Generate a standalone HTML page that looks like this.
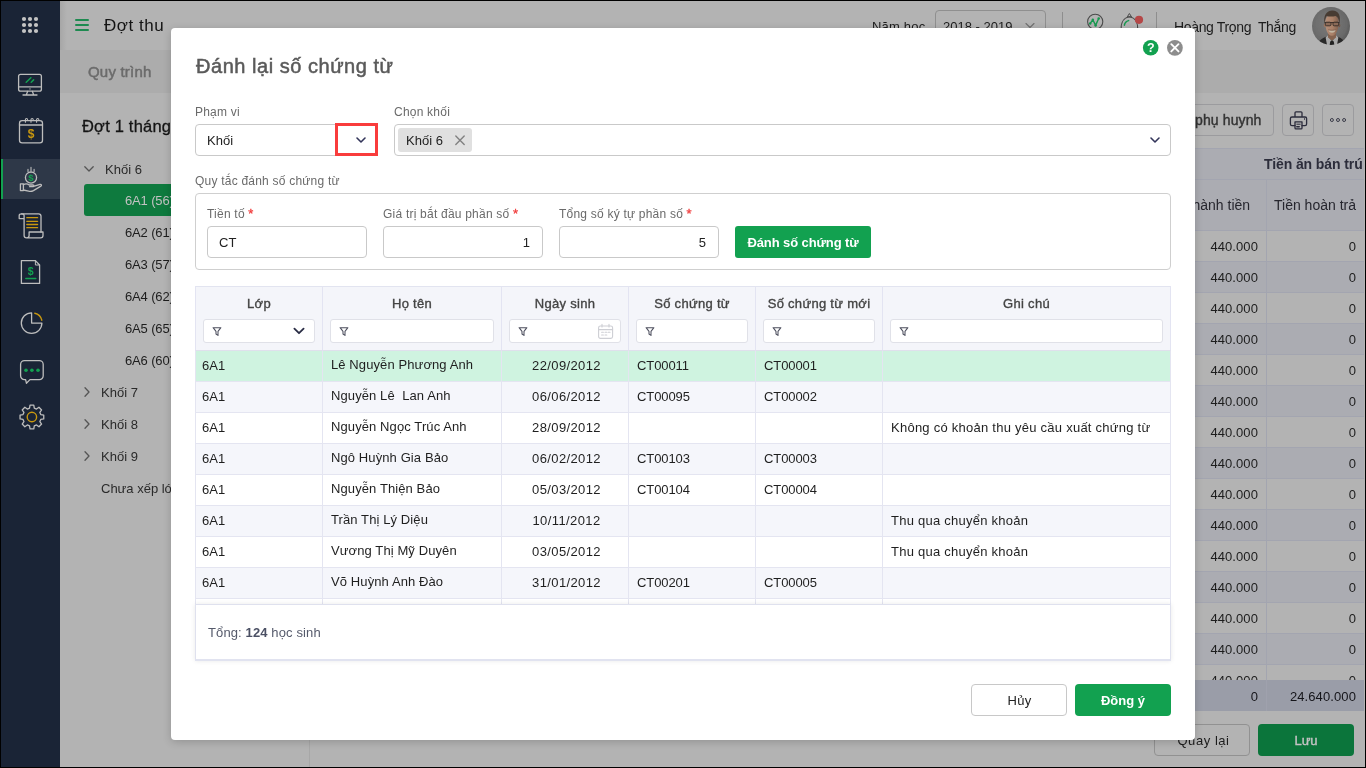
<!DOCTYPE html>
<html lang="vi">
<head>
<meta charset="utf-8">
<title>Đợt thu - Đánh lại số chứng từ</title>
<style>
*{box-sizing:border-box;margin:0;padding:0}
html,body{width:1366px;height:768px;overflow:hidden;background:#000}
body{font-family:"Liberation Sans",sans-serif;font-size:13px;color:#222;position:relative}
#app{position:absolute;left:0;top:0;width:1366px;height:768px;overflow:hidden;background:#b3b3b3;will-change:transform}
#app div,#app span,#app svg{position:absolute;white-space:pre}
#app span.i{position:static}
.frame{left:0;top:0;width:1366px;height:768px;border:1px solid #000;z-index:50;pointer-events:none}
/* sidebar */
#side{left:0;top:0;width:60px;height:768px;background:#1a2436}
#side .act{left:0;top:159px;width:60px;height:40px;background:#2e3848}
#side .bar{left:1px;top:159px;width:2px;height:40px;background:#12a150}
/* top */
#top{left:60px;top:0;width:1306px;height:50px;background:#b3b3b3}
#tabs{left:60px;top:50px;width:1306px;height:43px;background:#acacac}
.t{height:20px;line-height:20px}
/* tree */
.tr{left:125px;font-size:13px;color:#1d1d1d;height:20px;line-height:20px;letter-spacing:-.15px}
.tg{left:101px;font-size:13px;color:#2a2a2a;height:20px;line-height:20px}
/* right table */
.rrow{left:326px;width:1038px;height:31px;border-bottom:1px solid #a3a5b0}
.rrow.z{background:#abacb2}
.rrow i{position:absolute;left:940px;top:0;width:1px;height:31px;background:#a3a5b0}
.rrow b{position:absolute;font-weight:400;font-style:normal;letter-spacing:.08px;top:6px;height:20px;line-height:20px;font-size:13px;color:#1d1d1d;text-align:right}
.rrow b.a{right:106px}
.rrow b.c{right:8px}
/* modal */
#modal{left:171px;top:28px;width:1024px;height:712px;background:#fff;border-radius:4px;box-shadow:0 2px 8px rgba(0,0,0,.18)}
.lbl{font-size:12px;color:#6a6a6a;height:16px;line-height:16px;letter-spacing:.22px}
.lbl em{font-style:normal;color:#f03a3a;position:static;font-size:13px;-webkit-text-stroke:.3px #f03a3a}
.inp{height:32px;border:1px solid #c9c9c9;border-radius:4px;background:#fff}
.inp span{top:6px;height:20px;line-height:20px;font-size:13px;color:#222}
/* grid */
.gh{top:286px;height:65px;background:#f4f5fa;border-top:1px solid #e2e4f0;border-left:1px solid #e3e4f2;border-bottom:1px solid #dfe0ec}
.gh .h{left:0;right:0;top:7px;height:20px;line-height:20px;text-align:center;font-weight:400;-webkit-text-stroke:.35px #444;letter-spacing:.3px;font-size:13px;color:#444}
.gh .f{left:7px;right:7px;top:32px;height:24px;background:#fff;border:1px solid #e0e1e8;border-radius:3px}
.row{left:195px;width:976px;height:31px;border-bottom:1px solid #e4e5f1;border-left:1px solid #e4e5f1;border-right:1px solid #e4e5f1;background:#fff;font-size:13px;color:#1f1f1f}
.row.z{background:#f5f6fb}
.row.s{background:#cff3e0}
.row i{position:absolute;top:0;width:1px;height:31px;background:#e4e5f1}
.row span{top:5px;height:20px;line-height:20px}
.c1{left:6px}.c2{left:135px;top:4px !important;letter-spacing:.1px}.c3{left:307px;width:127px;text-align:center;letter-spacing:.39px}.c4{left:441px;letter-spacing:-.1px}.c5{left:568px;letter-spacing:-.1px}.c6{left:695px;letter-spacing:.25px}
.btn{height:32px;border-radius:3px;text-align:center;line-height:32px;font-size:14px}
</style>
</head>
<body>
<div id="app">
<div id="side">
  <div class="act"></div><div class="bar"></div>
  <svg width="60" height="768" viewBox="0 0 60 768" style="left:0;top:0" fill="none" stroke="#bdbdbd" stroke-width="1.3" stroke-linecap="round" stroke-linejoin="round">
    <!-- app grid dots -->
    <g fill="#c4c4c4" stroke="none">
      <circle cx="24" cy="19" r="2.1"/><circle cx="30" cy="19" r="2.1"/><circle cx="36" cy="19" r="2.1"/>
      <circle cx="24" cy="25" r="2.1"/><circle cx="30" cy="25" r="2.1"/><circle cx="36" cy="25" r="2.1"/>
      <circle cx="24" cy="31" r="2.1"/><circle cx="30" cy="31" r="2.1"/><circle cx="36" cy="31" r="2.1"/>
    </g>
    <!-- monitor -->
    <rect x="18.6" y="74.3" width="22.8" height="16.9" rx="2"/>
    <path d="M18.6 86.9H41.4M27.6 91.4L26.4 94.8M32.4 91.4L33.6 94.8M23 95H37"/>
    <circle cx="30" cy="88.9" r=".7" fill="#bdbdbd" stroke="none"/>
    <path d="M26.2 82.3L30.9 77.7M31.2 82.3L33.6 79.9" stroke="#12a150" stroke-width="1.5"/>
    <!-- calendar -->
    <rect x="19.5" y="120.6" width="23" height="22.2" rx="2.6"/>
    <path d="M19.5 125H42.5"/>
    <path d="M25.4 122.2V119.6a1.1 1.1 0 0 1 2.2 0M31 122.2V119.6a1.1 1.1 0 0 1 2.2 0M36.6 122.2V119.6a1.1 1.1 0 0 1 2.2 0" stroke-width="1.1"/>
    <text x="31" y="138.2" font-family="Liberation Sans, sans-serif" font-size="12" font-weight="700" fill="#c9980f" stroke="none" text-anchor="middle">$</text>
    <!-- hand + coin -->
    <circle cx="31" cy="177.6" r="5.6"/>
    <path d="M28 169.2V171.4M31 167.2V171M34.1 169.2V171.4" stroke-width="1.1"/>
    <text x="31" y="181.2" font-family="Liberation Sans, sans-serif" font-size="9.5" font-weight="700" fill="#12a150" stroke="none" text-anchor="middle">$</text>
    <path d="M20.4 183.8H23.4V190.6H20.4Z"/>
    <path d="M23.4 184.6C25.5 183.6 27.6 183.8 29.2 185H33c1.2 0 1.2 1.7 0 1.7H29.6M33.6 186.4L40 184.4c1.3-.4 2 1 .9 1.7L33.4 190.6c-1.6.9-3 1-4.8.6L23.4 190"/>
    <!-- scroll -->
    <path d="M24.2 218.6H19.2V215.4c0-2 4.9-2 4.9 0V235.6c0 3 5 3 5 0V232H43v3.6c0 1.4-1 2.3-2.4 2.3H26.6"/>
    <path d="M21.6 213.9H38.6c1.4 0 2.4 1 2.4 2.4V232"/>
    <path d="M26.8 217.7H37.6M26.8 221.3H37.6M26.8 224.5H37.6M26.8 227.7H37.6" stroke="#c9980f" stroke-width="1.3"/>
    <!-- document -->
    <path d="M21.4 260.6H35.4L39.6 265V283.4H21.4Z"/>
    <path d="M35.4 260.6V265H39.6" stroke-width="1"/>
    <text x="30.6" y="274.6" font-family="Liberation Sans, sans-serif" font-size="10.5" font-weight="700" fill="#12a150" stroke="none" text-anchor="middle">$</text>
    <path d="M25.8 278.5H35.8" stroke="#12a150" stroke-width="1.4"/>
    <!-- pie -->
    <path d="M31.6 312.8A10.3 10.3 0 1 0 41.9 323.1H31.6Z"/>
    <path d="M34.8 313.2A9.4 9.4 0 0 1 41.8 320.2" stroke="#c9980f" stroke-width="1.4"/>
    <!-- chat -->
    <path d="M24.4 360.6H39.4a3.8 3.8 0 0 1 3.8 3.8V375.8a3.8 3.8 0 0 1-3.8 3.8H30L26.4 383.2 25.6 379.6H24.4a3.8 3.8 0 0 1-3.8-3.8V364.4a3.8 3.8 0 0 1 3.8-3.8Z"/>
    <g fill="#12a150" stroke="none"><circle cx="26" cy="370.2" r="1.8"/><circle cx="31.9" cy="370.2" r="1.8"/><circle cx="38" cy="370.2" r="1.8"/></g>
    <!-- gear -->
    <g transform="translate(31.9 417)">
      <path d="M-2.38 -8.89 L-1.88 -11.85 L1.88 -11.85 L2.38 -8.89 L4.60 -7.97 L7.05 -9.71 L9.71 -7.05 L7.97 -4.60 L8.89 -2.38 L11.85 -1.88 L11.85 1.88 L8.89 2.38 L7.97 4.60 L9.71 7.05 L7.05 9.71 L4.60 7.97 L2.38 8.89 L1.88 11.85 L-1.88 11.85 L-2.38 8.89 L-4.60 7.97 L-7.05 9.71 L-9.71 7.05 L-7.97 4.60 L-8.89 2.38 L-11.85 1.88 L-11.85 -1.88 L-8.89 -2.38 L-7.97 -4.60 L-9.71 -7.05 L-7.05 -9.71 L-4.60 -7.97Z" stroke-linejoin="round"/>
      <circle r="4.7" stroke="#c9980f" stroke-width="1.4"/>
    </g>
  </svg>
</div>
<!--/SIDE-->
<div id="top"></div>
<div id="tabs"></div>
<div style="left:60px;top:1px;width:7px;height:49px;background:linear-gradient(to right,rgba(0,0,0,.07),rgba(0,0,0,0))"></div>
<!-- hamburger -->
<div style="left:75px;top:19px;width:14px;height:2px;background:#1e8a50;border-radius:1px"></div>
<div style="left:75px;top:24px;width:14px;height:2px;background:#1e8a50;border-radius:1px"></div>
<div style="left:75px;top:29px;width:14px;height:2px;background:#1e8a50;border-radius:1px"></div>
<div class="t" style="left:104px;top:16px;font-size:17px;color:#141414;letter-spacing:.55px">Đợt thu</div>
<div class="t" style="left:88px;top:62px;font-size:15px;color:#6b6b6b;-webkit-text-stroke:.5px #6b6b6b;letter-spacing:.2px">Quy trình</div>
<!-- school year -->
<div class="t" style="left:872px;top:17px;font-size:13px;color:#1c1c1c;letter-spacing:.2px">Năm học</div>
<div style="left:935px;top:10px;width:111px;height:32px;border:1px solid #8f8f8f;border-radius:4px"></div>
<div class="t" style="left:943px;top:17px;font-size:13px;color:#1c1c1c">2018 - 2019</div>
<svg style="left:1023px;top:21px" width="14" height="10" viewBox="0 0 14 10" fill="none" stroke="#707070" stroke-width="1.1" stroke-linecap="round" stroke-linejoin="round"><path d="M3 2.5L7 6.5L11 2.5"/></svg>
<div style="left:1062px;top:12px;width:1px;height:26px;background:#8e8e8e"></div>
<div style="left:1156px;top:12px;width:1px;height:26px;background:#8e8e8e"></div>
<!-- header icons -->
<svg style="left:1084px;top:8px" width="62" height="32" viewBox="1084 8 62 32" fill="none" stroke-linecap="round" stroke-linejoin="round">
  <circle cx="1095.2" cy="21.8" r="7.6" stroke="#4a4a4a" stroke-width="1.1"/>
  <path d="M1090.2 23.4L1092.8 19.8L1095.6 25.4L1098.7 18.5" stroke="#17994f" stroke-width="1.4"/>
  <g fill="#17994f"><circle cx="1090.2" cy="23.4" r="1.25"/><circle cx="1092.8" cy="19.8" r="1.25"/><circle cx="1095.6" cy="25.4" r="1.25"/><circle cx="1098.7" cy="18.5" r="1.25"/></g>
  <path d="M1121.2 30C1120.6 22.6 1123.8 17.6 1129.4 16.8C1135 17.6 1138.2 22.6 1137.6 30" stroke="#4a4a4a" stroke-width="1.1"/>
  <path d="M1127.5 16.5L1129.4 13.5L1131.3 16.5Z" stroke="#4a4a4a" stroke-width="1"/>
  <path d="M1124.4 25.2C1124.8 22.8 1126.4 21.2 1128.6 20.6" stroke="#17994f" stroke-width="1.5"/>
  <circle cx="1139" cy="19.8" r="4.1" fill="#b54747"/>
</svg>
<div class="t" style="left:1174px;top:17px;font-size:14px;color:#1c1c1c;letter-spacing:-.35px">Hoàng Trọng  Thắng</div>
<!-- avatar -->
<svg style="left:1312px;top:7px" width="38" height="38" viewBox="0 0 38 38">
  <defs><clipPath id="avc"><circle cx="19" cy="19" r="19"/></clipPath>
  <radialGradient id="avg" cx="45%" cy="45%" r="60%"><stop offset="0" stop-color="#7a7a7a"/><stop offset=".7" stop-color="#6a6a6a"/><stop offset="1" stop-color="#4e4e4e"/></radialGradient>
  <linearGradient id="avf" x1="0" y1="0" x2="1" y2="0"><stop offset="0" stop-color="#b58e78"/><stop offset=".55" stop-color="#a98068"/><stop offset="1" stop-color="#80604e"/></linearGradient>
  <filter id="avb" x="-10%" y="-10%" width="120%" height="120%"><feGaussianBlur stdDeviation=".45"/></filter></defs>
  <g clip-path="url(#avc)"><g filter="url(#avb)">
    <rect x="-2" y="-2" width="42" height="42" fill="url(#avg)"/>
    <path d="M5 40C6 33.5 10 31.5 14.5 29.5L20 36L25.5 29.5C30 31.5 33 33.5 34 40Z" fill="#2a2929"/>
    <path d="M13.6 30.4L15.6 28.6L20 35L24.4 28.6L26.4 30.4L24.6 40H15.4Z" fill="#a9a9a9"/>
    <path d="M18.2 34.6L20 33.4L21.8 34.6L22.6 40H17.4Z" fill="#232323"/>
    <path d="M16 26H24V30.5L20 33.4L16 30.5Z" fill="#85634f"/>
    <path d="M13.4 16C13.2 10.5 15.6 8 20 8C24.4 8 26.8 10.5 26.6 16C26.6 22 24.6 28.6 20 28.8C15.4 28.6 13.4 22 13.4 16Z" fill="url(#avf)"/>
    <ellipse cx="12.7" cy="18.4" rx="1" ry="1.8" fill="#9a7460"/><ellipse cx="27.3" cy="18.4" rx="1" ry="1.8" fill="#74574a"/>
    <path d="M12.6 16.8C11 9 14.4 3.6 20.4 3.4C26.4 3.4 29.2 8.4 27.4 16.8C27.2 12.6 26 10 23.6 9C20 10 16.6 9.6 14.6 9C13.4 11 12.8 13.6 12.6 16.8Z" fill="#473a31"/>
    <path d="M12.6 15.6H27.4" stroke="#2a2320" stroke-width=".9"/>
    <rect x="13.4" y="15.2" width="5.6" height="3.6" rx="1.2" fill="#8a6a58" stroke="#2a2320" stroke-width=".8"/>
    <rect x="21" y="15.2" width="5.6" height="3.6" rx="1.2" fill="#8a6a58" stroke="#2a2320" stroke-width=".8"/>
    <path d="M16.2 22.8C17.8 23.4 22.2 23.4 23.8 22.8C23 25.2 21.4 25.8 20 25.8C18.6 25.8 17 25.2 16.2 22.8Z" fill="#c2b6a2"/>
    <path d="M16.2 22.8C17.8 23.4 22.2 23.4 23.8 22.8" stroke="#6a4538" stroke-width=".6" fill="none"/>
  </g></g>
</svg>
<!--/TOP-->
<!-- left panel -->
<div style="left:309px;top:93px;width:1px;height:675px;background:#a7a7a7"></div>
<div style="left:310px;top:93px;width:7px;height:675px;background:linear-gradient(to right,rgba(0,0,0,.045),rgba(0,0,0,0))"></div>
<div class="t" style="left:82px;top:114px;height:24px;line-height:24px;font-size:16.5px;color:#151515;-webkit-text-stroke:.3px #151515;letter-spacing:.2px">Đợt 1 tháng 9</div>
<svg style="left:83px;top:164px" width="12" height="10" viewBox="0 0 12 10" fill="none" stroke="#555" stroke-width="1.3" stroke-linecap="round" stroke-linejoin="round"><path d="M1.8 2.8L6 7L10.2 2.8"/></svg>
<div class="tg" style="left:105px;top:160px">Khối 6</div>
<div style="left:84px;top:184px;width:218px;height:32px;background:#0e7a3e;border-radius:3px"></div>
<div class="tr" style="top:191px;color:#c2c2c2">6A1 (56)</div>
<div class="tr" style="top:223px">6A2 (61)</div>
<div class="tr" style="top:255px">6A3 (57)</div>
<div class="tr" style="top:287px">6A4 (62)</div>
<div class="tr" style="top:319px">6A5 (65)</div>
<div class="tr" style="top:351px">6A6 (60)</div>
<div class="tg" style="top:383px">Khối 7</div>
<div class="tg" style="top:415px">Khối 8</div>
<div class="tg" style="top:447px">Khối 9</div>
<div class="tg" style="top:479px">Chưa xếp lớp</div>
<svg style="left:83px;top:386px" width="8" height="12" viewBox="0 0 8 12" fill="none" stroke="#555" stroke-width="1.3" stroke-linecap="round" stroke-linejoin="round"><path d="M2 1.8L6 6L2 10.2"/></svg>
<svg style="left:83px;top:418px" width="8" height="12" viewBox="0 0 8 12" fill="none" stroke="#555" stroke-width="1.3" stroke-linecap="round" stroke-linejoin="round"><path d="M2 1.8L6 6L2 10.2"/></svg>
<svg style="left:83px;top:450px" width="8" height="12" viewBox="0 0 8 12" fill="none" stroke="#555" stroke-width="1.3" stroke-linecap="round" stroke-linejoin="round"><path d="M2 1.8L6 6L2 10.2"/></svg>
<!-- right toolbar -->
<div class="btn" style="left:1050px;top:104px;width:224px;border:1px solid #9b9b9e;border-radius:4px;text-align:right;padding-right:11.5px;color:#333;-webkit-text-stroke:.4px #333;letter-spacing:.12px;line-height:31px">Gửi thông báo cho phụ huynh</div>
<div class="btn" style="left:1282px;top:104px;width:32px;border:1px solid #9b9b9e;border-radius:4px"></div>
<div class="btn" style="left:1322px;top:104px;width:32px;border:1px solid #9b9b9e;border-radius:4px"></div>
<svg style="left:1282px;top:104px" width="32" height="32" viewBox="1282 104 32 32" fill="none" stroke="#2b2c3c" stroke-width="1.3" stroke-linejoin="round" stroke-linecap="round">
  <path d="M1295 116.4V112.8a1 1 0 0 1 1-1H1301a1 1 0 0 1 1 1V116.4"/>
  <path d="M1295 125.6H1292a1.6 1.6 0 0 1-1.6-1.6V118.6a1.6 1.6 0 0 1 1.6-1.6H1305a1.6 1.6 0 0 1 1.6 1.6V124a1.6 1.6 0 0 1-1.6 1.6H1302"/>
  <path d="M1295 121.8H1302V128a.9.9 0 0 1-.9.9H1295.900a.9.9 0 0 1-.9-.9Z"/>
  <path d="M1296.800 124.200H1300.200" stroke-width="1"/><path d="M1296.800 126.700H1299.200" stroke-width="1.5"/>
  <path d="M1304.500 118.600V119.400" stroke-width=".9"/>
</svg>
<svg style="left:1322px;top:104px" width="32" height="32" viewBox="1322 104 32 32" fill="none" stroke="#3a3b48" stroke-width="1"><circle cx="1331.900" cy="120" r="1.500"/><circle cx="1338" cy="120" r="1.500"/><circle cx="1344.100" cy="120" r="1.500"/></svg>
<!-- right table -->
<div style="left:326px;top:148px;width:1038px;height:83px;background:#abacb2;border-top:1px solid #a3a5b0;border-bottom:1px solid #a3a5b0"></div>
<div style="left:326px;top:179px;width:1038px;height:1px;background:#a3a5b0"></div>
<div style="left:1266px;top:179px;width:1px;height:52px;background:#a3a5b0"></div>
<div class="t" style="left:1264px;top:154px;font-weight:700;font-size:14px;color:#2c2d3b;letter-spacing:-.1px">Tiền ăn bán trú</div>
<div class="t" style="left:1168px;top:195px;width:98px;text-align:center;font-size:14px;color:#26262e">Thành tiền</div>
<div class="t" style="left:1266px;top:195px;width:98px;text-align:center;font-size:14px;color:#26262e">Tiền hoàn trả</div>
<div class="rrow" style="top:231px"><i></i><b class="a">440.000</b><b class="c">0</b></div>
<div class="rrow z" style="top:262px"><i></i><b class="a">440.000</b><b class="c">0</b></div>
<div class="rrow" style="top:293px"><i></i><b class="a">440.000</b><b class="c">0</b></div>
<div class="rrow z" style="top:324px"><i></i><b class="a">440.000</b><b class="c">0</b></div>
<div class="rrow" style="top:355px"><i></i><b class="a">440.000</b><b class="c">0</b></div>
<div class="rrow z" style="top:386px"><i></i><b class="a">440.000</b><b class="c">0</b></div>
<div class="rrow" style="top:417px"><i></i><b class="a">440.000</b><b class="c">0</b></div>
<div class="rrow z" style="top:448px"><i></i><b class="a">440.000</b><b class="c">0</b></div>
<div class="rrow" style="top:479px"><i></i><b class="a">440.000</b><b class="c">0</b></div>
<div class="rrow z" style="top:510px"><i></i><b class="a">440.000</b><b class="c">0</b></div>
<div class="rrow" style="top:541px"><i></i><b class="a">440.000</b><b class="c">0</b></div>
<div class="rrow z" style="top:572px"><i></i><b class="a">440.000</b><b class="c">0</b></div>
<div class="rrow" style="top:603px"><i></i><b class="a">440.000</b><b class="c">0</b></div>
<div class="rrow z" style="top:634px"><i></i><b class="a">440.000</b><b class="c">0</b></div>
<div class="rrow" style="top:665px"><i></i><b class="a">440.000</b><b class="c">0</b></div>
<div style="left:326px;top:680px;width:1038px;height:31px;background:#9a9da8"></div>
<div style="left:1266px;top:680px;width:1px;height:31px;background:#9fa1ad"></div>
<div class="t" style="left:1150px;top:687px;width:108px;text-align:right;font-size:13px;color:#15151a">0</div>
<div class="t" style="left:1256px;top:687px;width:100px;text-align:right;font-size:13px;color:#15151a;letter-spacing:.1px">24.640.000</div>
<div style="left:310px;top:711px;width:1056px;height:57px;background:#b3b3b3"></div>
<div class="btn" style="left:1154px;top:724px;width:96px;border:1px solid #919191;border-radius:4px;color:#1c1c1c;line-height:32px;font-size:13px;letter-spacing:.55px;padding-left:3px">Quay lại</div>
<div class="btn" style="left:1258px;top:724px;width:96px;background:#0b753b;border-radius:4px;color:#c2c2c2;-webkit-text-stroke:.4px #c2c2c2;font-size:13px;line-height:34px">Lưu</div>
<!--/MAIN-->
<div id="modal"></div>
<div class="t" style="left:196px;top:52px;height:28px;line-height:28px;font-size:20px;color:#5a5a5a;-webkit-text-stroke:.5px #5a5a5a;letter-spacing:.53px">Đánh lại số chứng từ</div>
<!-- help + close -->
<svg style="left:1142px;top:39px" width="42" height="18" viewBox="1142 39 42 18">
  <circle cx="1150.7" cy="47.8" r="7.8" fill="#12a150"/>
  <text x="1150.7" y="52.3" font-family="Liberation Sans, sans-serif" font-size="12.5" font-weight="700" fill="#fff" text-anchor="middle">?</text>
  <circle cx="1174.9" cy="47.8" r="7.9" fill="#8d8d8d"/>
  <path d="M1171.3 44.2L1178.5 51.4M1178.5 44.2L1171.3 51.4" stroke="#fff" stroke-width="1.9" stroke-linecap="round"/>
</svg>
<div class="lbl" style="left:195px;top:104px">Phạm vi</div>
<div class="inp" style="left:195px;top:124px;width:182px"><span style="left:11px">Khối</span></div>
<div style="left:335px;top:123px;width:43px;height:33px;border:3px solid #f93c3c"></div>
<svg style="left:354px;top:135px" width="14" height="10" viewBox="0 0 14 10" fill="none" stroke="#33355a" stroke-width="1.6" stroke-linecap="round" stroke-linejoin="round"><path d="M3 3L7 7L11 3"/></svg>
<div class="lbl" style="left:394px;top:104px">Chọn khối</div>
<div class="inp" style="left:394px;top:124px;width:777px"></div>
<div style="left:398px;top:128px;width:74px;height:24px;background:#e0e0e0;border-radius:3px"></div>
<div class="t" style="left:406px;top:131px;font-size:13px;color:#222">Khối 6</div>
<svg style="left:454px;top:134px" width="12" height="12" viewBox="0 0 12 12" fill="none" stroke="#808080" stroke-width="1.4" stroke-linecap="round"><path d="M1.8 2L10.2 10.4M10.2 2L1.800 10.4"/></svg>
<svg style="left:1148px;top:135px" width="14" height="10" viewBox="0 0 14 10" fill="none" stroke="#33355a" stroke-width="1.6" stroke-linecap="round" stroke-linejoin="round"><path d="M3 3L7 7L11 3"/></svg>
<div class="lbl" style="left:195px;top:173px">Quy tắc đánh số chứng từ</div>
<div style="left:195px;top:193px;width:976px;height:77px;border:1px solid #cfcfcf;border-radius:4px"></div>
<div class="lbl" style="left:207px;top:206px">Tiền tố <em>*</em></div>
<div class="lbl" style="left:383px;top:206px">Giá trị bắt đầu phần số <em>*</em></div>
<div class="lbl" style="left:559px;top:206px">Tổng số ký tự phần số <em>*</em></div>
<div class="inp" style="left:207px;top:226px;width:160px"><span style="left:11px">CT</span></div>
<div class="inp" style="left:383px;top:226px;width:160px"><span style="right:12px">1</span></div>
<div class="inp" style="left:559px;top:226px;width:160px"><span style="right:12px">5</span></div>
<div class="btn" style="left:735px;top:226px;width:136px;background:#12a150;color:#fff;font-weight:700;font-size:13px;line-height:34px;letter-spacing:-.1px">Đánh số chứng từ</div>
<!-- grid -->
<div style="left:195px;top:286px;width:976px;height:374px;overflow:hidden;position:absolute"></div>
<div class="gh" style="left:195px;width:127px;"><div class="h">Lớp</div><div class="f"><svg style="left:8px;top:6px" width="10" height="11" viewBox="0 0 10 11" fill="none" stroke="#4d4f5e" stroke-width="1.05" stroke-linejoin="round"><path d="M1.1 1.7H8.9L6 5.3V9.4L4 8V5.3Z"/></svg><svg style="right:9px;top:7px" width="12" height="8" viewBox="0 0 12 8" fill="none" stroke="#2a2d45" stroke-width="1.8" stroke-linecap="round" stroke-linejoin="round"><path d="M1.4 1.6L6 6.2L10.6 1.6"/></svg></div></div>
<div class="gh" style="left:322px;width:179px;"><div class="h">Họ tên</div><div class="f"><svg style="left:8px;top:6px" width="10" height="11" viewBox="0 0 10 11" fill="none" stroke="#4d4f5e" stroke-width="1.05" stroke-linejoin="round"><path d="M1.1 1.7H8.9L6 5.3V9.4L4 8V5.3Z"/></svg></div></div>
<div class="gh" style="left:501px;width:127px;"><div class="h">Ngày sinh</div><div class="f"><svg style="left:8px;top:6px" width="10" height="11" viewBox="0 0 10 11" fill="none" stroke="#4d4f5e" stroke-width="1.05" stroke-linejoin="round"><path d="M1.1 1.7H8.9L6 5.3V9.4L4 8V5.3Z"/></svg><svg style="right:6px;top:3px" width="17" height="17" viewBox="0 0 17 17" fill="none" stroke="#cdced4" stroke-width="1.1" stroke-linecap="round"><rect x="1.6" y="3" width="14" height="12.4" rx="1.8"/><path d="M1.6 6.600H15.600M5 1.400V4M12 1.400V4M4.600 9.200H6.400M8 9.200H9.800M11.200 9.200H13M4.600 12H6.400M8 12H9.800"/></svg></div></div>
<div class="gh" style="left:628px;width:127px;"><div class="h">Số chứng từ</div><div class="f"><svg style="left:8px;top:6px" width="10" height="11" viewBox="0 0 10 11" fill="none" stroke="#4d4f5e" stroke-width="1.05" stroke-linejoin="round"><path d="M1.1 1.7H8.9L6 5.3V9.4L4 8V5.3Z"/></svg></div></div>
<div class="gh" style="left:755px;width:127px;"><div class="h">Số chứng từ mới</div><div class="f"><svg style="left:8px;top:6px" width="10" height="11" viewBox="0 0 10 11" fill="none" stroke="#4d4f5e" stroke-width="1.05" stroke-linejoin="round"><path d="M1.1 1.7H8.9L6 5.3V9.4L4 8V5.3Z"/></svg></div></div>
<div class="gh" style="left:882px;width:289px;border-right:1px solid #e3e4f2"><div class="h">Ghi chú</div><div class="f"><svg style="left:8px;top:6px" width="10" height="11" viewBox="0 0 10 11" fill="none" stroke="#4d4f5e" stroke-width="1.05" stroke-linejoin="round"><path d="M1.1 1.7H8.9L6 5.3V9.4L4 8V5.3Z"/></svg></div></div>
<div style="left:195px;top:351px;width:976px;height:253px;overflow:hidden">
<div style="left:-195px;top:-351px;width:1366px;height:768px">
<div class="row s" style="top:351px"><i style="left:126px"></i><i style="left:305px"></i><i style="left:432px"></i><i style="left:559px"></i><i style="left:686px"></i><span class="c1">6A1</span><span class="c2">Lê Nguyễn Phương Anh</span><span class="c3">22/09/2012</span><span class="c4">CT00011</span><span class="c5">CT00001</span></div>
<div class="row z" style="top:382px"><i style="left:126px"></i><i style="left:305px"></i><i style="left:432px"></i><i style="left:559px"></i><i style="left:686px"></i><span class="c1">6A1</span><span class="c2">Nguyễn Lê  Lan Anh</span><span class="c3">06/06/2012</span><span class="c4">CT00095</span><span class="c5">CT00002</span></div>
<div class="row " style="top:413px"><i style="left:126px"></i><i style="left:305px"></i><i style="left:432px"></i><i style="left:559px"></i><i style="left:686px"></i><span class="c1">6A1</span><span class="c2">Nguyễn Ngọc Trúc Anh</span><span class="c3">28/09/2012</span><span class="c6">Không có khoản thu yêu cầu xuất chứng từ</span></div>
<div class="row z" style="top:444px"><i style="left:126px"></i><i style="left:305px"></i><i style="left:432px"></i><i style="left:559px"></i><i style="left:686px"></i><span class="c1">6A1</span><span class="c2">Ngô Huỳnh Gia Bảo</span><span class="c3">06/02/2012</span><span class="c4">CT00103</span><span class="c5">CT00003</span></div>
<div class="row " style="top:475px"><i style="left:126px"></i><i style="left:305px"></i><i style="left:432px"></i><i style="left:559px"></i><i style="left:686px"></i><span class="c1">6A1</span><span class="c2">Nguyễn Thiện Bảo</span><span class="c3">05/03/2012</span><span class="c4">CT00104</span><span class="c5">CT00004</span></div>
<div class="row z" style="top:506px"><i style="left:126px"></i><i style="left:305px"></i><i style="left:432px"></i><i style="left:559px"></i><i style="left:686px"></i><span class="c1">6A1</span><span class="c2">Trần Thị Lý Diệu</span><span class="c3">10/11/2012</span><span class="c6">Thu qua chuyển khoản</span></div>
<div class="row " style="top:537px"><i style="left:126px"></i><i style="left:305px"></i><i style="left:432px"></i><i style="left:559px"></i><i style="left:686px"></i><span class="c1">6A1</span><span class="c2">Vương Thị Mỹ Duyên</span><span class="c3">03/05/2012</span><span class="c6">Thu qua chuyển khoản</span></div>
<div class="row z" style="top:568px"><i style="left:126px"></i><i style="left:305px"></i><i style="left:432px"></i><i style="left:559px"></i><i style="left:686px"></i><span class="c1">6A1</span><span class="c2">Võ Huỳnh Anh Đào</span><span class="c3">31/01/2012</span><span class="c4">CT00201</span><span class="c5">CT00005</span></div>
<div class="row " style="top:599px"><i style="left:126px"></i><i style="left:305px"></i><i style="left:432px"></i><i style="left:559px"></i><i style="left:686px"></i></div>
</div></div>
<div style="left:195px;top:604px;width:976px;height:57px;background:#fff;border:1px solid #dfe1ee;border-bottom:2px solid #e1e3f0;box-shadow:0 0 5px rgba(0,0,0,.09)"></div>
<div class="t" style="left:208px;top:623px;font-size:13px;color:#555a6b;letter-spacing:.12px">Tổng: <span class="i" style="font-weight:700;color:#4b5064">124</span> học sinh</div>
<div class="btn" style="left:971px;top:684px;width:96px;border:1px solid #c8c8c8;border-radius:4px;color:#222;line-height:32px;font-size:13px;letter-spacing:.3px;padding-left:1px">Hủy</div>
<div class="btn" style="left:1075px;top:684px;width:96px;background:#12a150;border-radius:4px;color:#fff;font-weight:700;font-size:13px;line-height:34px">Đồng ý</div>
<!--/MODAL-->
<div class="frame"></div>
</div>
</body>
</html>
